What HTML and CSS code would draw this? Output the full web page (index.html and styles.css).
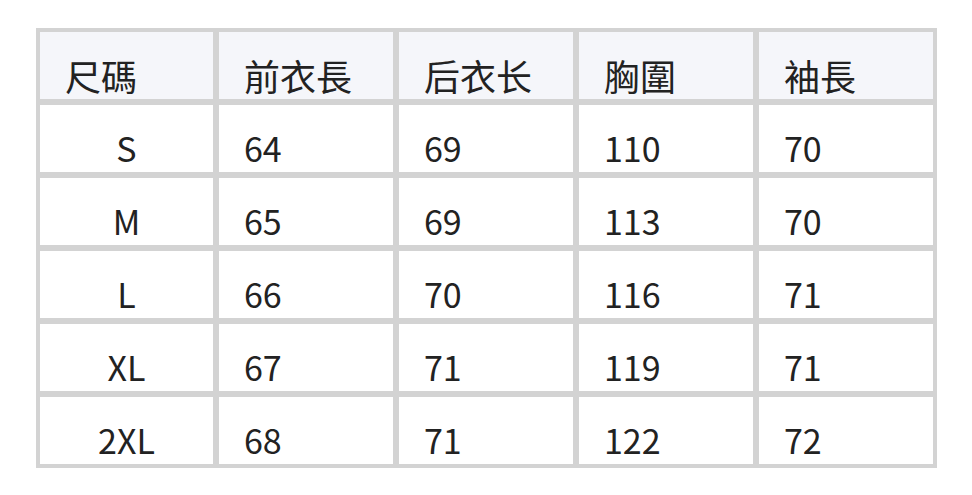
FILE: index.html
```html
<!DOCTYPE html>
<html lang="zh-Hant">
<head>
<meta charset="utf-8">
<link rel="stylesheet" href="styles.css">
</head>
<body>
<div class="size-table">
  <div class="cell head">尺碼</div>
  <div class="cell head">前衣長</div>
  <div class="cell head">后衣长</div>
  <div class="cell head">胸圍</div>
  <div class="cell head">袖長</div>

  <div class="cell size">S</div>
  <div class="cell">64</div>
  <div class="cell">69</div>
  <div class="cell">110</div>
  <div class="cell">70</div>

  <div class="cell size">M</div>
  <div class="cell">65</div>
  <div class="cell">69</div>
  <div class="cell">113</div>
  <div class="cell">70</div>

  <div class="cell size">L</div>
  <div class="cell">66</div>
  <div class="cell">70</div>
  <div class="cell">116</div>
  <div class="cell">71</div>

  <div class="cell size">XL</div>
  <div class="cell">67</div>
  <div class="cell">71</div>
  <div class="cell">119</div>
  <div class="cell">71</div>

  <div class="cell size">2XL</div>
  <div class="cell">68</div>
  <div class="cell">71</div>
  <div class="cell">122</div>
  <div class="cell">72</div>
</div>
</body>
</html>
```
FILE: styles.css
```css
html, body {
  margin: 0;
  padding: 0;
  background: #ffffff;
}
body {
  padding: 28px 0 0 36px;
  font-family: "Noto Sans CJK TC", "Noto Sans", sans-serif;
  color: #222222;
}
.size-table {
  display: grid;
  grid-template-columns: 173px repeat(4, 174px);
  grid-auto-rows: 67px;
  gap: 6px;
  padding: 4px;
  width: max-content;
  background: #d3d3d3;
}
.cell {
  background: #ffffff;
  display: flex;
  align-items: flex-end;
  padding: 0 24px 4px 25px;
  font-size: 34px;
  line-height: 40px;
}
.cell.head {
  background: #f5f6fa;
  font-size: 36px;
  line-height: 40px;
  padding-bottom: 4px;
}
.cell.size {
  justify-content: center;
  padding-left: 0;
  padding-right: 0;
}
```
